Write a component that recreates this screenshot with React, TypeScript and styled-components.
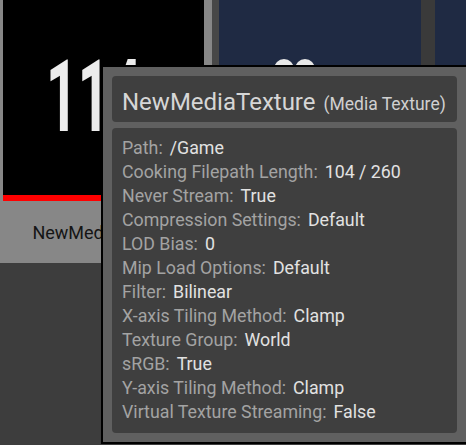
import React from "react";
import styled, { createGlobalStyle } from "styled-components";

const GlobalStyle = createGlobalStyle`
  html, body {
    margin: 0;
    padding: 0;
    background: #3d3d3d;
    overflow: hidden;
  }
  body {
    font-family: Roboto, "Noto Sans", "Liberation Sans", sans-serif;
  }
`;

const Page = styled.div`
  position: relative;
  width: 466px;
  height: 445px;
  overflow: hidden;
  background: #3d3d3d;
`;

const TileRow = styled.div`
  display: flex;
  align-items: flex-start;
`;

const AssetTile = styled.div`
  width: 212px;
  flex: none;
  display: flex;
  flex-direction: column;
  background: #878787;
`;

const Thumb = styled.div`
  margin: 0 8px 0 3px;
  height: 195px;
  background: #000;
  display: flex;
  align-items: center;
  justify-content: flex-start;
  overflow: hidden;
`;

const BigNumber = styled.div`
  font-family: Roboto, "Liberation Sans", sans-serif;
  font-weight: 700;
  font-size: 101px;
  line-height: 1;
  color: #ececec;
  transform: scaleX(0.55);
  transform-origin: left center;
  margin-left: 43px;
  margin-top: -3px;
  white-space: nowrap;
`;

const RedBar = styled.div`
  margin: 0 8px 0 3px;
  height: 6px;
  background: #ff0000;
`;

const TileLabel = styled.div`
  height: 62px;
  display: flex;
  align-items: center;
  justify-content: center;
  color: #151515;
  font-size: 18px;
  padding-right: 2px;
`;

const Gutter = styled.div<{ $w: number; $c: string }>`
  width: ${(p) => p.$w}px;
  flex: none;
  height: 263px;
  background: ${(p) => p.$c};
`;

const NavyTile = styled.div<{ $w: number }>`
  width: ${(p) => p.$w}px;
  flex: none;
  height: 263px;
  background: #1f2a43;
  position: relative;
`;

const Blob = styled.svg`
  position: absolute;
  left: 54px;
  top: 56px;
`;

const Tooltip = styled.div`
  position: absolute;
  left: 101px;
  top: 65px;
  width: 367px;
  box-sizing: border-box;
  border: 2px solid #000;
  background: #606060;
  padding: 9px;
  display: flex;
  flex-direction: column;
  gap: 6px;
`;

const Header = styled.div`
  height: 46px;
  box-sizing: border-box;
  background: #3f3f3f;
  border-radius: 4px;
  padding: 0 10px;
  display: flex;
  align-items: baseline;
  gap: 8px;
  padding-top: 12px;
`;

const Title = styled.span`
  font-size: 24px;
  line-height: 28px;
  color: #d6d6d6;
`;

const SubTitle = styled.span`
  font-size: 17.5px;
  color: #d0d0d0;
`;

const Body = styled.div`
  background: #3f3f3f;
  border-radius: 4px;
  padding: 8px 10px 9px;
  display: flex;
  flex-direction: column;
`;

const Row = styled.div`
  display: flex;
  align-items: baseline;
  gap: 7px;
  height: 24px;
  line-height: 24px;
  font-size: 17.8px;
  white-space: nowrap;
`;

const Label = styled.span`
  color: #a3a3a3;
`;

const Value = styled.span`
  color: #e2e2e2;
`;

const rows: [string, string][] = [
  ["Path:", "/Game"],
  ["Cooking Filepath Length:", "104 / 260"],
  ["Never Stream:", "True"],
  ["Compression Settings:", "Default"],
  ["LOD Bias:", "0"],
  ["Mip Load Options:", "Default"],
  ["Filter:", "Bilinear"],
  ["X-axis Tiling Method:", "Clamp"],
  ["Texture Group:", "World"],
  ["sRGB:", "True"],
  ["Y-axis Tiling Method:", "Clamp"],
  ["Virtual Texture Streaming:", "False"],
];

export default function App() {
  return (
    <>
      <GlobalStyle />
      <Page>
        <TileRow>
          <AssetTile>
            <Thumb>
              <BigNumber>114</BigNumber>
            </Thumb>
            <RedBar />
            <TileLabel>NewMediaTexture</TileLabel>
          </AssetTile>
          <Gutter $w={7} $c="#474747" />
          <NavyTile $w={202}>
            <Blob width="44" height="30" viewBox="0 0 44 30">
              <circle cx="11" cy="13" r="10" fill="#e8e8e8" />
              <circle cx="32" cy="13" r="10" fill="#e8e8e8" />
            </Blob>
          </NavyTile>
          <Gutter $w={14} $c="#3a3a3a" />
          <NavyTile $w={60} />
        </TileRow>
        <Tooltip>
          <Header>
            <Title>NewMediaTexture</Title>
            <SubTitle>(Media Texture)</SubTitle>
          </Header>
          <Body>
            {rows.map(([l, v]) => (
              <Row key={l}>
                <Label>{l}</Label>
                <Value>{v}</Value>
              </Row>
            ))}
          </Body>
        </Tooltip>
      </Page>
    </>
  );
}
